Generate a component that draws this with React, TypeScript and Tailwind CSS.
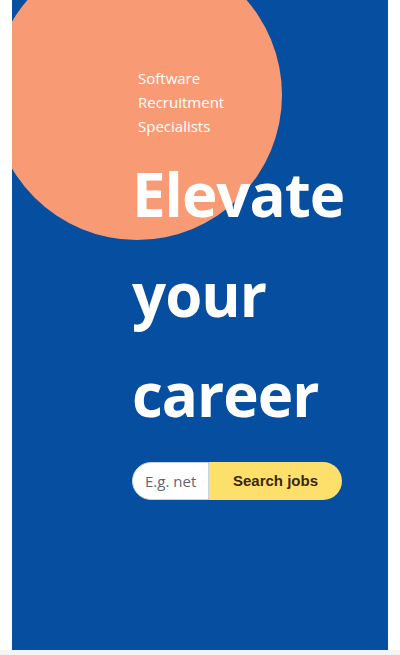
export default function App() {
  return (
    <div className="min-h-[655px] bg-[#f4f4f4]">
      <div className="bg-white px-3">
        {/* Hero */}
        <section className="relative h-[650px] overflow-hidden bg-[#064ea0]">
          <div className="absolute left-[-20px] top-[-50px] h-[290px] w-[290px] rounded-full bg-[#f89b75]" />
          <div className="relative pl-[120px] pt-[66px]" style={{ fontFamily: '"Open Sans", sans-serif' }}>
            <p className="w-[100px] pl-[6px] text-[15px] leading-[24px] text-white">
              Software Recruitment Specialists
            </p>
            <h1 className="mt-[6px] text-[60px] font-bold leading-[100px] tracking-[-1px] text-white">
              Elevate
              <br />
              your
              <br />
              career
            </h1>
            <form className="mt-[18px] flex h-[38px] w-[210px]" onSubmit={(e) => e.preventDefault()}>
              <input
                type="text"
                placeholder="E.g. net"
                className="w-[77px] min-w-0 rounded-l-full border border-[#c9d3e4] bg-white pl-[12px] text-[15px] text-gray-800 outline-none placeholder:text-[#5f6673]"
                style={{ fontFamily: '"Open Sans", sans-serif' }}
              />
              <button
                type="submit"
                className="w-[133px] rounded-r-full bg-[#fde06b] text-[15px] font-bold text-[#3a2608]"
                style={{ fontFamily: '"Liberation Sans", Arial, sans-serif' }}
              >
                Search jobs
              </button>
            </form>
          </div>
        </section>
      </div>
    </div>
  );
}
